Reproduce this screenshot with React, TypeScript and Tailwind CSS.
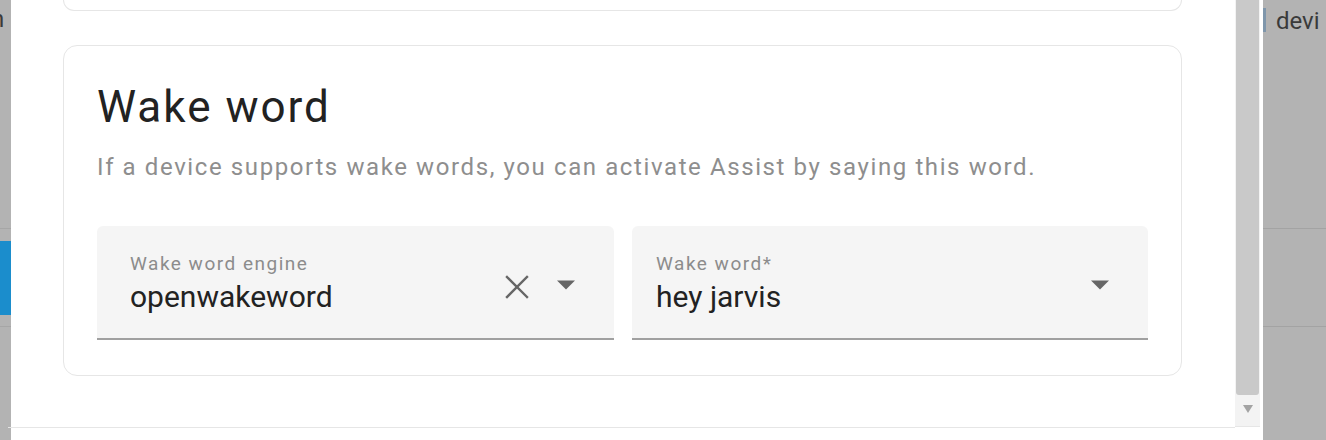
function Caret() {
  return (
    <svg width="20" height="10" viewBox="0 0 20 10" className="shrink-0">
      <path d="M1 0.5 L19 0.5 L10 9.5 Z" fill="#666666" />
    </svg>
  )
}

function Clear() {
  return (
    <svg width="24" height="24" viewBox="0 0 24 24" className="shrink-0">
      <path d="M2 2 L22 22 M22 2 L2 22" stroke="#666666" strokeWidth="2.4" strokeLinecap="square" />
    </svg>
  )
}

function Field({ label, value, clearable, cls }: { label: string; value: string; clearable?: boolean; cls: string }) {
  return (
    <div className={`shrink-0 h-[114px] bg-[#f5f5f5] rounded-t-[6px] border-b-2 border-[#a0a0a0] flex items-start pr-[38px] ${cls}`}>
      <div className="flex-1 flex flex-col pt-[26px]">
        <span className="text-[19px] leading-[24px] tracking-[1.5px] text-[#8c8c8c]">{label}</span>
        <span className="text-[30px] leading-[36px] text-[#222222] mt-[3px]">{value}</span>
      </div>
      {clearable && (
        <div className="mt-[49px] mr-[27px]">
          <Clear />
        </div>
      )}
      <div className="mt-[54px]">
        <Caret />
      </div>
    </div>
  )
}

export default function App() {
  return (
    <div className="w-[1326px] h-[440px] flex overflow-hidden bg-white" style={{ fontFamily: "Roboto, 'Liberation Sans', sans-serif" }}>
      {/* left backdrop */}
      <div className="w-[11px] bg-[#b3b3b3] flex flex-col shrink-0">
        <div className="h-[229px] border-b border-[#a6a6a6] overflow-hidden">
          <span className="block -ml-[9px] mt-[4px] text-[24px] text-[#3a3a3a] leading-[30px]">n</span>
        </div>
        <div className="h-[12px]" />
        <div className="h-[74px] bg-[#1b8dcc]" />
        <div className="h-[12px] border-b border-[#a6a6a6]" />
      </div>

      {/* dialog */}
      <div className="w-[1224px] flex flex-col shrink-0 bg-white">
        <div className="h-[427px] pl-[52px] flex flex-col">
          <div className="w-[1119px] h-[11px] border-x border-b border-[#e6e6e6] rounded-b-[14px]" />
          <div className="w-[1119px] mt-[34px] h-[331px] border border-[#e6e6e6] rounded-[14px] px-[33px] pt-[35px]">
            <h2 className="text-[44px] leading-[52px] tracking-[2px] text-[#222222] font-normal">Wake word</h2>
            <p className="text-[24px] leading-[30px] tracking-[1.6px] text-[#8e8e8e] mt-[19px] whitespace-nowrap">
              If a device supports wake words, you can activate Assist by saying this word.
            </p>
            <div className="flex gap-[18px] mt-[44px]">
              <Field label="Wake word engine" value="openwakeword" clearable cls="w-[517px] pl-[33px]" />
              <Field label="Wake word*" value="hey jarvis" cls="w-[516px] pl-[24px]" />
            </div>
          </div>
        </div>
        <div className="border-t border-[#e6e6e6] mx-[-3px] flex-1" />
      </div>

      {/* scrollbar */}
      <div className="w-[25px] shrink-0 bg-[#f3f3f3] flex flex-col items-center">
        <div className="w-[23px] h-[395px] bg-[#c9c9c9] rounded-b-[3px]" />
        <svg width="12" height="10" viewBox="0 0 12 10" className="mt-[9px]">
          <path d="M1 1 L11 1 L6 9 Z" fill="#a3a3a3" />
        </svg>
        <div className="flex-1 w-full bg-white mt-[12px] border-t border-[#e6e6e6]" />
      </div>
      <div className="w-[3px] bg-white shrink-0" />

      {/* right backdrop */}
      <div className="flex-1 bg-[#b3b3b3] flex flex-col">
        <div className="h-[229px] border-b border-[#a3a3a3] flex items-start pt-[6px]">
          <div className="w-[3px] h-[24px] bg-[#7f96ab] mt-[2px]" />
          <span className="ml-[10px] text-[24px] leading-[30px] text-[#3a3a3a] whitespace-nowrap">devi</span>
        </div>
        <div className="h-[98px] border-b border-[#a3a3a3]" />
      </div>
    </div>
  )
}
